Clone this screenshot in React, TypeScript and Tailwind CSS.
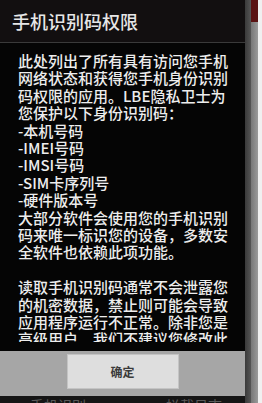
import React from 'react';

const lines1 = [
  "此处列出了所有具有访问您手机",
  "网络状态和获得您手机身份识别",
  "码权限的应用。LBE隐私卫士为",
  "您保护以下身份识别码：",
  "-本机号码",
  "-IMEI号码",
  "-IMSI号码",
  "-SIM卡序列号",
  "-硬件版本号",
  "大部分软件会使用您的手机识别",
  "码来唯一标识您的设备，多数安",
  "全软件也依赖此项功能。",
];

const lines2 = [
  "读取手机识别码通常不会泄露您",
  "的机密数据，禁止则可能会导致",
  "应用程序运行不正常。除非您是",
  "高级用户，我们不建议您修改此",
];

export default function App() {
  return (
    <div className="flex w-[262px] h-[403px] overflow-hidden bg-[#1a1a1a] font-['Noto_Sans_CJK_SC','Noto_Sans',sans-serif]">
      {/* Dialog */}
      <div className="flex flex-col w-[245px] shrink-0">
        {/* Title */}
        <div className="h-[43px] flex items-center pl-[12px] bg-[#120f10] border-b border-[#3a3a3a] shrink-0">
          <span className="text-[18px] leading-none font-medium text-[#e6e6e6]">手机识别码权限</span>
        </div>

        {/* Body, scroll area clipped short of the button bar */}
        <div className="h-[308px] bg-[#050505] pl-[18px] pb-[9px] shrink-0">
          <div className="h-full overflow-hidden pt-[9px] text-[15px] leading-[17.4px] font-medium text-[#ededed] whitespace-nowrap">
            {lines1.map((l, i) => (
              <div key={i}>{l}</div>
            ))}
            <div className="h-[17.4px]" />
            {lines2.map((l, i) => (
              <div key={i}>{l}</div>
            ))}
          </div>
        </div>

        {/* Button bar */}
        <div className="h-[45px] bg-[#a6a6a6] flex items-start justify-center pt-[3px] shrink-0">
          <button className="w-[112px] h-[35px] bg-[#dedede] border border-[#c4c4c4] text-[12px] font-bold text-[#3a3a3a] flex items-center justify-center">
            确定
          </button>
        </div>

        {/* Background peeking below */}
        <div className="flex-1 bg-[#151515] overflow-hidden flex gap-[80px] pl-[30px]">
          <span className="text-[14px] leading-[14px] mt-[2px] text-[#5a5a5a]">手机识别</span>
          <span className="text-[14px] leading-[14px] mt-[2px] text-[#5a5a5a]">拦截日志</span>
        </div>
      </div>

      {/* Right background strip */}
      <div className="flex flex-1">
        <div className="w-[6px] bg-gradient-to-r from-[#3a3a3a] to-[#555555]" />
        <div className="w-[7px] flex flex-col">
          <div className="h-[22px] bg-[#5a1212]" />
          <div className="flex-1 bg-gradient-to-r from-[#777777] to-[#9a9a9a]" />
        </div>
        <div className="flex-1 bg-[#f0f0f0]" />
      </div>
    </div>
  );
}
